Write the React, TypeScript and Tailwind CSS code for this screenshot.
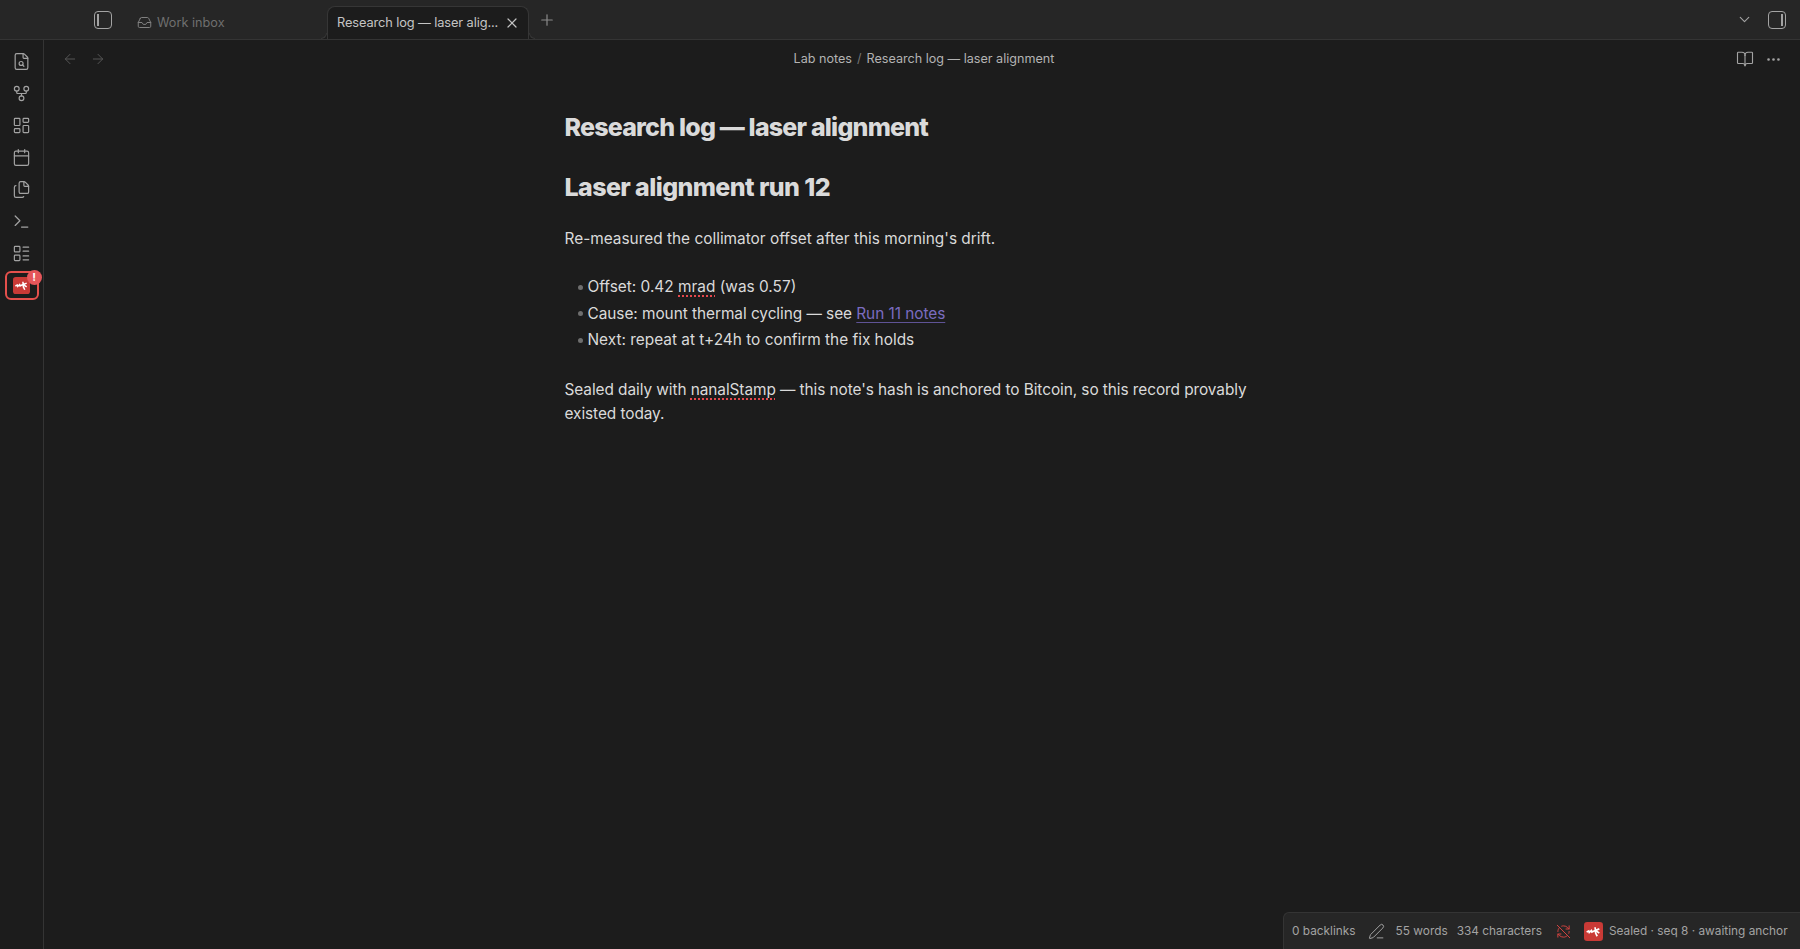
import {
  ArrowLeft,
  ArrowRight,
  BookOpen,
  Calendar,
  ChevronDown,
  Ellipsis,
  FileSearch,
  Files,
  GitFork,
  Inbox,
  LayoutDashboard,
  LayoutList,
  PenLine,
  Plus,
  RefreshCwOff,
  Terminal,
  X,
} from "lucide-react";

function StampLogo({ size }: { size: number }) {
  return (
    <svg width={size} height={size} viewBox="0 0 18 18" className="shrink-0">
      <rect width="18" height="18" rx="3" fill="#c93a36" />
      <path
        d="M2.5 9.5 L4.5 8.5 L5 10 L7 8 L7.5 9.5 L9.5 8.5 L14.5 6.5 M10.5 5 L11 10.5 L12.5 13.5 M11 8 L14.5 10.5"
        fill="none"
        stroke="#fff"
        strokeWidth="1.6"
      />
    </svg>
  );
}

const sideIcons = [FileSearch, GitFork, LayoutDashboard, Calendar, Files, Terminal, LayoutList];

function PanelIcon({ side }: { side: "left" | "right" }) {
  return (
    <div className="flex h-[18px] w-[18px] rounded-[4px] border-[1.5px] border-[#a3a3a3]">
      {side === "left" ? (
        <div className="ml-[2px] my-[2px] w-[1.5px] bg-[#a3a3a3]" />
      ) : (
        <div className="ml-auto mr-[2px] my-[2px] w-[2px] bg-[#a3a3a3]" />
      )}
    </div>
  );
}

function ActiveTab() {
  return (
    <div className="relative flex h-[33px] w-[202px] items-center self-end rounded-t-[8px] border border-b-0 border-[#363636] bg-[#1c1c1c] pl-[9px] text-[12.8px] text-[#c4c4c4]">
      <span className="w-[162px] whitespace-nowrap tracking-[-0.1px]">Research log — laser alig...</span>
      <X size={16} className="ml-[5px] text-[#c4c4c4]" strokeWidth={1.8} />
      <div className="absolute bottom-0 left-[-7px] h-[6px] w-[6px] bg-[#1c1c1c]">
        <div className="h-full w-full rounded-br-[6px] border-b border-r border-[#363636] bg-[#262626]" />
      </div>
      <div className="absolute bottom-0 right-[-7px] h-[6px] w-[6px] bg-[#1c1c1c]">
        <div className="h-full w-full rounded-bl-[6px] border-b border-l border-[#363636] bg-[#262626]" />
      </div>
    </div>
  );
}

export default function App() {
  return (
    <div className="relative flex h-[949px] w-[1800px] flex-col overflow-hidden bg-[#1c1c1c] font-['Inter',sans-serif]">
      {/* tab strip */}
      <div className="flex h-[40px] shrink-0 items-stretch border-b border-[#343434] bg-[#262626]">
        <div className="ml-[94px] flex items-center">
          <PanelIcon side="left" />
        </div>
        <div className="ml-[25px] flex w-[190px] items-center gap-[5px] pt-[6px] text-[12.7px] text-[#6f6f6f]">
          <Inbox size={15} strokeWidth={1.6} className="text-[#808080]" />
          <span>Work inbox</span>
        </div>
        <ActiveTab />
        <div className="ml-[9px] flex items-center">
          <Plus size={18} className="text-[#8a8a8a]" strokeWidth={1.6} />
        </div>
        <div className="ml-auto mr-[14px] flex items-center gap-[15px]">
          <ChevronDown size={17} className="text-[#a3a3a3]" strokeWidth={1.6} />
          <PanelIcon side="right" />
        </div>
      </div>

      <div className="flex flex-1">
        {/* ribbon */}
        <div className="flex w-[44px] shrink-0 flex-col items-center border-r border-[#343434] pt-[5px]">
          {sideIcons.map((Icon, i) => (
            <div key={i} className="flex h-[32px] w-full items-center justify-center">
              <Icon size={19} strokeWidth={1.5} className="text-[#a3a3a3]" />
            </div>
          ))}
          <div className="relative mt-[2px] flex h-[29px] w-[34px] items-center justify-center rounded-[6px] border-2 border-[#e5504c]">
            <StampLogo size={17} />
            <div className="absolute right-[-5px] top-[-3px] flex h-[15px] w-[15px] items-center justify-center rounded-full bg-[#e5565a] text-[11px] font-bold text-white">
              !
            </div>
          </div>
        </div>

        {/* note pane */}
        <div className="flex flex-1 flex-col">
          <div className="flex h-[37px] items-center pl-[17px] pr-[18px] pt-[1px]">
            <div className="flex w-[60px] items-center gap-[12px] pl-[1px]">
              <ArrowLeft size={16} strokeWidth={1.5} className="text-[#555555]" />
              <ArrowRight size={16} strokeWidth={1.5} className="text-[#555555]" />
            </div>
            <div className="flex flex-1 justify-center gap-[5px] pl-[5px] text-[12.6px] text-[#b3b3b3]">
              <span>Lab notes</span>
              <span className="text-[#777777]">/</span>
              <span>Research log — laser alignment</span>
            </div>
            <div className="flex w-[60px] items-center justify-end gap-[11px]">
              <BookOpen size={18} strokeWidth={1.5} className="text-[#a3a3a3]" />
              <Ellipsis size={17} strokeWidth={1.8} className="text-[#a3a3a3]" />
            </div>
          </div>

          <div className="ml-[520.5px] w-[700px] pt-[34px] text-[15.4px] leading-[24px] text-[#dadada]">
            <h1 className="text-[25px] font-extrabold leading-[32px] tracking-[-0.8px] text-[#dadada]">
              Research log — laser alignment
            </h1>
            <h2 className="mt-[28px] text-[25px] font-extrabold leading-[32px] tracking-[-0.6px] text-[#dadada]">
              Laser alignment run 12
            </h2>
            <p className="mt-[23.5px]">Re-measured the collimator offset after this morning's drift.</p>
            <ul className="mt-[24.5px] space-y-[2.5px]">
              <li className="flex items-center">
                <span className="ml-[13px] mr-[5px] h-[5px] w-[5px] rounded-full bg-[#6e6e6e]" />
                <span>
                  Offset: 0.42{" "}
                  <span className="underline decoration-[#e5484d] decoration-dotted decoration-[1.5px] underline-offset-[3px]">
                    mrad
                  </span>{" "}
                  (was 0.57)
                </span>
              </li>
              <li className="flex items-center">
                <span className="ml-[13px] mr-[5px] h-[5px] w-[5px] rounded-full bg-[#6e6e6e]" />
                <span className="tracking-[-0.05px]">
                  Cause: mount thermal cycling — see{" "}
                  <span className="text-[#7b6cc0] underline decoration-[#5f5396] decoration-1 underline-offset-[3px]">
                    Run 11 notes
                  </span>
                </span>
              </li>
              <li className="flex items-center">
                <span className="ml-[13px] mr-[5px] h-[5px] w-[5px] rounded-full bg-[#6e6e6e]" />
                <span>Next: repeat at t+24h to confirm the fix holds</span>
              </li>
            </ul>
            <p className="mt-[26px] tracking-[-0.07px]">
              Sealed daily with{" "}
              <span className="underline decoration-[#e5484d] decoration-dotted decoration-[1.5px] underline-offset-[3px]">
                nanalStamp
              </span>{" "}
              — this note's hash is anchored to Bitcoin, so this record provably existed today.
            </p>
          </div>
        </div>
      </div>

      {/* status bar */}
      <div className="absolute bottom-0 right-0 flex h-[37px] w-[517px] items-center whitespace-nowrap rounded-tl-[6px] border-l border-t border-[#343434] bg-[#262626] pl-[8px] pt-[1px] text-[11.85px] text-[#a3a3a3]">
        <span>0 backlinks</span>
        <PenLine size={17} strokeWidth={1.4} className="ml-[12px]" />
        <span className="ml-[11px]">55 words</span>
        <span className="ml-[9px]">334 characters</span>
        <RefreshCwOff size={15} strokeWidth={1.6} className="ml-[14px] text-[#d2423f]" />
        <span className="ml-[13px]">
          <StampLogo size={19} />
        </span>
        <span className="ml-[6px]">Sealed · seq 8 · awaiting anchor</span>
      </div>
    </div>
  );
}
